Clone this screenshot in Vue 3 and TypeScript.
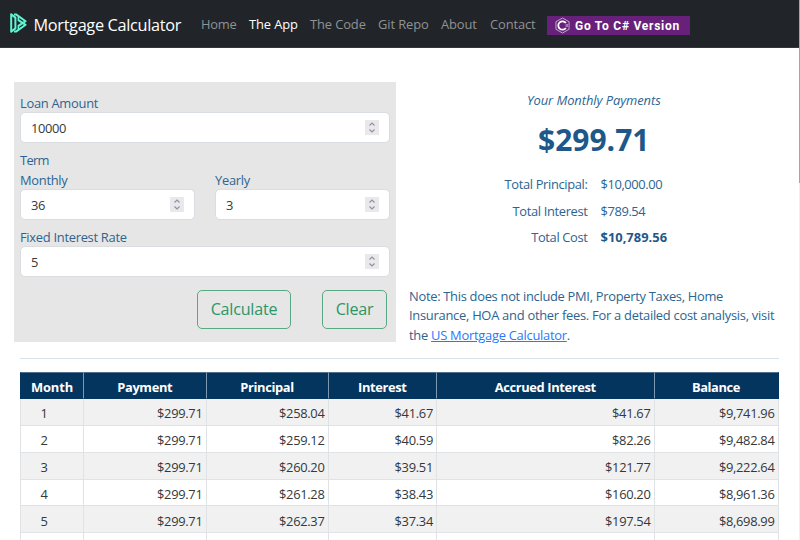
<script setup lang="ts">
import { ref } from 'vue'

interface NavItem { label: string; key: string; active?: boolean }

const navItems: NavItem[] = [
  { label: 'Home', key: 'home' },
  { label: 'The App', key: 'app', active: true },
  { label: 'The Code', key: 'code' },
  { label: 'Git Repo', key: 'repo' },
  { label: 'About', key: 'about' },
  { label: 'Contact', key: 'contact' },
]

const loan = ref('10000')
const months = ref('36')
const years = ref('3')
const rate = ref('5')

const headings: string[] = ['Month', 'Payment', 'Principal', 'Interest', 'Accrued Interest', 'Balance']
const rows: string[][] = [
  ['1', '$299.71', '$258.04', '$41.67', '$41.67', '$9,741.96'],
  ['2', '$299.71', '$259.12', '$40.59', '$82.26', '$9,482.84'],
  ['3', '$299.71', '$260.20', '$39.51', '$121.77', '$9,222.64'],
  ['4', '$299.71', '$261.28', '$38.43', '$160.20', '$8,961.36'],
  ['5', '$299.71', '$262.37', '$37.34', '$197.54', '$8,698.99'],
  ['', '', '', '', '', ''],
]
</script>

<template>
  <div class="page">
    <header class="navbar">
      <a class="brand">
        <svg class="logo" viewBox="0 0 17 20" width="17" height="20">
          <g fill="none" stroke="#5ef5d3" stroke-width="2" stroke-linejoin="round">
            <path d="M1.2 1.2V18.8L5.4 15.4V4.6Z" />
            <path d="M4 1.4H6L15.6 8.2L8.4 12.8" />
            <path d="M4 18.6H6L15.6 11.8L8.4 7.2" />
            <path d="M8.4 4V8M8.4 12V16" stroke-width="1.6" />
          </g>
        </svg>
        <span>Mortgage Calculator</span>
      </a>
      <nav class="nav">
        <a v-for="item in navItems" :key="item.key" :class="[item.key, { active: item.active }]">{{ item.label }}</a>
      </nav>
      <a class="version">
        <svg viewBox="0 0 16 18" width="15" height="17">
          <path d="M8 1L15 5V13L8 17L1 13V5Z" fill="none" stroke="#d6bedb" stroke-width="0.9" />
          <path d="M11.6 6.3A4.5 4.5 0 1 0 11.6 11.7" fill="none" stroke="#fff" stroke-width="1.9" />
          <path d="M12 7.4V10.6M13.4 7.4V10.6M11.2 8.3H14M11.2 9.7H14" stroke="#d6bedb" stroke-width="0.5" />
        </svg>
        <span>Go To C# Version</span>
      </a>
    </header>

    <main>
      <div class="top">
        <section class="form">
          <label>Loan Amount</label>
          <div class="field">
            <input v-model="loan" />
            <svg class="spin" viewBox="0 0 14 15"><path d="M4.5 5.5L7 3L9.5 5.5M4.5 9.5L7 12L9.5 9.5" /></svg>
          </div>
          <div class="term">Term</div>
          <div class="pair">
            <div>
              <label>Monthly</label>
              <div class="field">
                <input v-model="months" />
                <svg class="spin" viewBox="0 0 14 15"><path d="M4.5 5.5L7 3L9.5 5.5M4.5 9.5L7 12L9.5 9.5" /></svg>
              </div>
            </div>
            <div>
              <label>Yearly</label>
              <div class="field">
                <input v-model="years" />
                <svg class="spin" viewBox="0 0 14 15"><path d="M4.5 5.5L7 3L9.5 5.5M4.5 9.5L7 12L9.5 9.5" /></svg>
              </div>
            </div>
          </div>
          <label class="rate">Fixed Interest Rate</label>
          <div class="field">
            <input v-model="rate" />
            <svg class="spin" viewBox="0 0 14 15"><path d="M4.5 5.5L7 3L9.5 5.5M4.5 9.5L7 12L9.5 9.5" /></svg>
          </div>
          <div class="actions">
            <button class="calc">Calculate</button>
            <button class="clear">Clear</button>
          </div>
        </section>

        <section class="results">
          <div class="caption"><em>Your Monthly Payments</em></div>
          <div class="amount"><span>$299.71</span></div>
          <dl>
            <dt>Total Principal:</dt><dd>$10,000.00</dd>
            <dt>Total Interest</dt><dd>$789.54</dd>
            <dt>Total Cost</dt><dd class="strong">$10,789.56</dd>
          </dl>
          <p class="note">
            <span class="first">Note: This does not include PMI, Property Taxes, Home</span><br>
            <span>Insurance, HOA and other fees. For a detailed cost analysis, visit</span><br>
            <span>the <a>US Mortgage Calculator</a>.</span>
          </p>
        </section>
      </div>

      <div class="rule"></div>

      <div class="table">
        <div class="row head">
          <div v-for="h in headings" :key="h" class="cell">{{ h }}</div>
        </div>
        <div v-for="(r, i) in rows" :key="i" class="row" :class="{ odd: i % 2 === 0 }">
          <div v-for="(c, j) in r" :key="j" class="cell">{{ c }}</div>
        </div>
      </div>
    </main>
    <div class="scrollbar"></div>
  </div>
</template>

<style>
body { margin: 0; overflow: hidden; background: #fff; }
</style>

<style scoped>
* { box-sizing: border-box; }
.page {
  position: relative;
  width: 800px;
  height: 540px;
  overflow: hidden;
  font-family: "Open Sans", "Noto Sans", sans-serif;
  font-size: 12.9px;
  line-height: 20px;
  color: #2c6491;
  white-space: nowrap;
}
.navbar {
  display: flex;
  align-items: flex-start;
  height: 48px;
  padding-left: 10px;
  background: #212529;
  border-bottom: 1px solid #38343e;
}
.brand { display: flex; width: 191px; padding-top: 13px; color: #fff; }
.logo { margin-right: 6.5px; flex: none; }
.brand span { font-size: 16.3px; line-height: 24px; letter-spacing: -0.32px; }
.nav { display: flex; padding-top: 14px; color: #909294; letter-spacing: -0.1px; }
.nav .active { color: #fff; }
.nav .home { width: 48px; letter-spacing: -0.25px; }
.nav .app { width: 61px; }
.nav .code { width: 68px; }
.nav .repo { width: 63px; }
.nav .about { width: 49px; }
.nav .contact { width: 57px; }
.version {
  display: flex;
  align-items: center;
  width: 143px;
  height: 19px;
  margin-top: 16px;
  padding-left: 8px;
  background: #68217a;
  color: #fff;
  font: bold 12px/19px Roboto, sans-serif;
  letter-spacing: 0.75px;
}
.version svg { margin-right: 5px; flex: none; }
.version span { padding-top: 1px; }
main { padding: 34px 21px 0 14px; }
.top { display: flex; height: 260px; }
.form { width: 382px; height: 260px; padding: 11px 6px 0; background: #e6e6e6; }
label { display: block; height: 19px; letter-spacing: -0.28px; }
.field {
  display: flex;
  align-items: center;
  height: 31px;
  padding: 0 10px;
  background: #fff;
  border: 1px solid #d9dde2;
  border-radius: 5px;
}
.field input {
  flex: 1;
  min-width: 0;
  padding: 0;
  border: 0;
  outline: 0;
  background: none;
  color: #343a40;
  font: inherit;
  letter-spacing: -0.35px;
}
.spin { flex: none; width: 14px; height: 15px; background: #e9e9ed; }
.spin path { fill: none; stroke: #92929a; stroke-width: 1.2; }
.term { height: 20px; margin-top: 7px; letter-spacing: -0.7px; }
.pair { display: grid; grid-template-columns: 175px 175px; justify-content: space-between; }
.rate { margin-top: 7px; height: 19px; }
.actions { display: flex; justify-content: flex-end; gap: 31px; margin-top: 13px; padding-right: 3px; }
.actions button {
  height: 39px;
  padding: 0;
  border: 1px solid #5aa983;
  border-radius: 5px;
  background: none;
  color: #2d9566;
  font: 16.1px/37px "Open Sans", "Noto Sans", sans-serif;
  letter-spacing: -0.25px;
}
.actions .calc { width: 94px; letter-spacing: -0.2px; }
.clear { width: 65px; }
.results { width: 383px; padding: 8px 0 0 13px; }
.caption { padding-left: 118px; height: 20px; letter-spacing: -0.05px; }
.amount { height: 40px; margin-top: 10px; padding-left: 129px; color: #1e5889; font-size: 30px; line-height: 40px; font-weight: 700; }
dl {
  display: grid;
  grid-template-columns: 178.5px 1fr;
  column-gap: 13px;
  grid-auto-rows: 26.5px;
  margin: 14px 0 0;
}
dt { text-align: right; letter-spacing: -0.35px; }
dd { margin: 0; letter-spacing: -0.4px; }
dd.strong { font-weight: 700; color: #1e5889; letter-spacing: 0.02px; }
.note { margin: 33px 0 0; line-height: 19.6px; letter-spacing: -0.26px; }
.note .first { letter-spacing: -0.29px; }
.note a { color: #2977fd; text-decoration: underline; }
.rule { height: 1px; margin: 16px 0 13px 6px; background: #d7e1e9; }
.table { margin-left: 6px; width: 759px; color: #34383b; }
.row { display: grid; grid-template-columns: 64px 122.5px 122px 108.5px 217.5px 124px; height: 26.9px; }
.cell {
  padding: 4.6px 3px 0 0;
  border-right: 1px solid #e0e3e6;
  border-bottom: 1px solid #e0e3e6;
  line-height: 20px;
  text-align: right;
  letter-spacing: -0.3px;
}
.cell:first-child { border-left: 1px solid #e0e3e6; padding-right: 16px; text-align: center; }
.odd .cell { background: #f1f1f1; }
.head .cell {
  padding: 3.5px 0 0;
  background: #04355f;
  border-color: #7d98ae;
  border-bottom-color: #04355f;
  border-top: 1px solid #536f8b;
  color: #fff;
  font-weight: 700;
  text-align: center;
  letter-spacing: -0.38px;
}
.head .cell:first-child { border-left-color: #04355f; padding: 3.5px 0 0; letter-spacing: -0.1px; }
.head .cell:last-child { border-right-color: #04355f; }
.scrollbar { position: absolute; right: 0; top: 0; width: 1px; height: 540px; background: linear-gradient(#a5a5a5 0 183px, #f0f0f0 183px); }
</style>
